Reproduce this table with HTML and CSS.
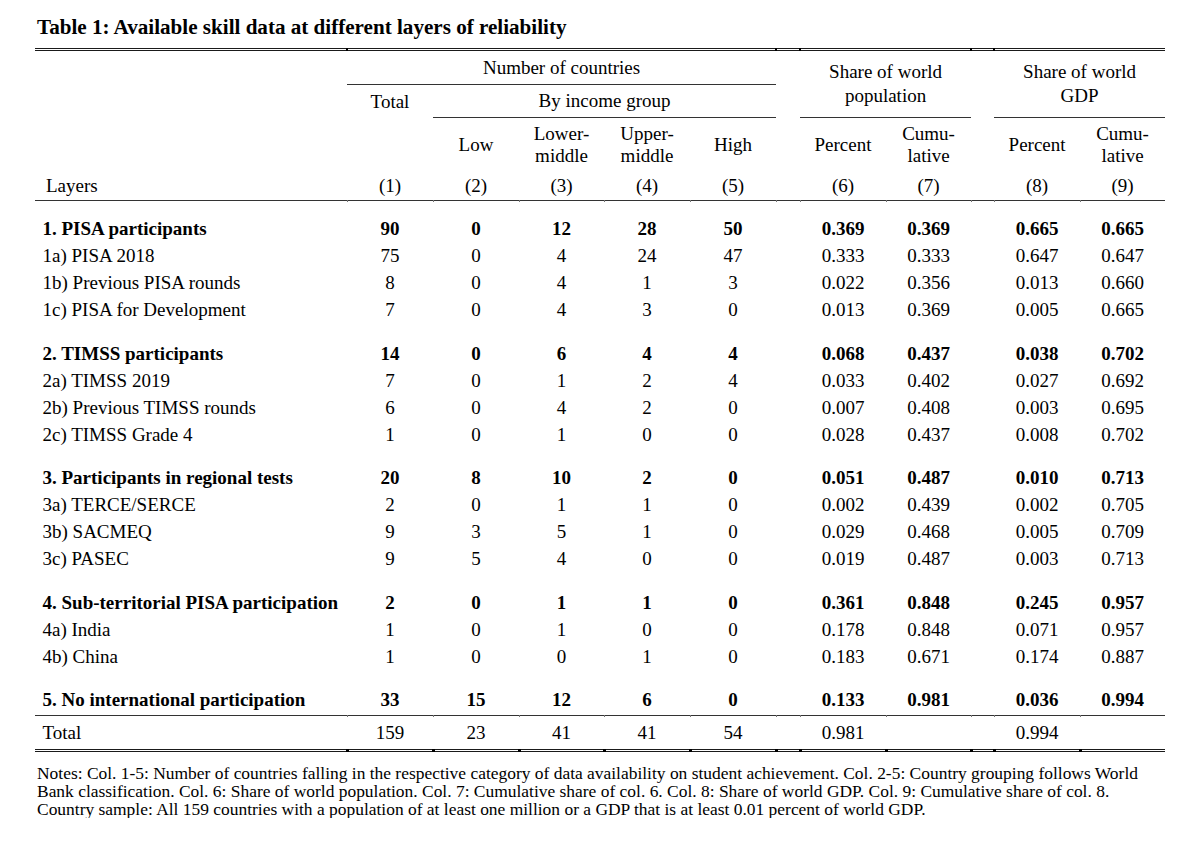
FILE: index.html
```html
<!DOCTYPE html>
<html>
<head>
<meta charset="utf-8">
<title>Table 1</title>
<link rel="stylesheet" href="styles.css">
</head>
<body>
<div class="page">
  <h1 class="title">Table 1: Available skill data at different layers of reliability</h1>
  <table class="tbl">
    <colgroup>
      <col class="w-lab">
      <col class="w-num"><col class="w-num"><col class="w-num85"><col class="w-num"><col class="w-num">
      <col class="w-gap1">
      <col class="w-num"><col class="w-num85">
      <col class="w-gap2">
      <col class="w-num"><col class="w-num85">
    </colgroup>
    <thead>
      <tr class="hA">
        <td rowspan="3"></td>
        <td colspan="5" class="rb dot-top">Number of countries</td>
        <td rowspan="3" class="dot-top"></td>
        <td colspan="2" rowspan="2" class="rb two dot-top">Share of world<br>population</td>
        <td rowspan="3" class="dot-top"></td>
        <td colspan="2" rowspan="2" class="rb two dot-top">Share of world<br>GDP</td>
      </tr>
      <tr class="hB">
        <td>Total</td>
        <td colspan="4" class="rb">By income group</td>
      </tr>
      <tr class="hC">
        <td></td>
        <td>Low</td>
        <td class="twoC">Lower-<br>middle</td>
        <td class="twoC">Upper-<br>middle</td>
        <td>High</td>
        <td>Percent</td>
        <td class="twoC">Cumu-<br>lative</td>
        <td>Percent</td>
        <td class="twoC">Cumu-<br>lative</td>
      </tr>
      <tr class="hD">
        <td class="lab-h">Layers</td>
        <td>(1)</td><td>(2)</td><td>(3)</td><td>(4)</td><td>(5)</td>
        <td></td>
        <td>(6)</td><td>(7)</td>
        <td></td>
        <td>(8)</td><td>(9)</td>
      </tr>
    </thead>
    <tbody>
      <tr class="grp first b">
        <td class="lab">1. PISA participants</td>
        <td>90</td><td>0</td><td>12</td><td>28</td><td>50</td><td></td>
        <td>0.369</td><td>0.369</td><td></td><td>0.665</td><td>0.665</td>
      </tr>
      <tr>
        <td class="lab">1a) PISA 2018</td>
        <td>75</td><td>0</td><td>4</td><td>24</td><td>47</td><td></td>
        <td>0.333</td><td>0.333</td><td></td><td>0.647</td><td>0.647</td>
      </tr>
      <tr>
        <td class="lab">1b) Previous PISA rounds</td>
        <td>8</td><td>0</td><td>4</td><td>1</td><td>3</td><td></td>
        <td>0.022</td><td>0.356</td><td></td><td>0.013</td><td>0.660</td>
      </tr>
      <tr>
        <td class="lab">1c) PISA for Development</td>
        <td>7</td><td>0</td><td>4</td><td>3</td><td>0</td><td></td>
        <td>0.013</td><td>0.369</td><td></td><td>0.005</td><td>0.665</td>
      </tr>

      <tr class="grp b">
        <td class="lab">2. TIMSS participants</td>
        <td>14</td><td>0</td><td>6</td><td>4</td><td>4</td><td></td>
        <td>0.068</td><td>0.437</td><td></td><td>0.038</td><td>0.702</td>
      </tr>
      <tr>
        <td class="lab">2a) TIMSS 2019</td>
        <td>7</td><td>0</td><td>1</td><td>2</td><td>4</td><td></td>
        <td>0.033</td><td>0.402</td><td></td><td>0.027</td><td>0.692</td>
      </tr>
      <tr>
        <td class="lab">2b) Previous TIMSS rounds</td>
        <td>6</td><td>0</td><td>4</td><td>2</td><td>0</td><td></td>
        <td>0.007</td><td>0.408</td><td></td><td>0.003</td><td>0.695</td>
      </tr>
      <tr>
        <td class="lab">2c) TIMSS Grade 4</td>
        <td>1</td><td>0</td><td>1</td><td>0</td><td>0</td><td></td>
        <td>0.028</td><td>0.437</td><td></td><td>0.008</td><td>0.702</td>
      </tr>

      <tr class="grp b">
        <td class="lab">3. Participants in regional tests</td>
        <td>20</td><td>8</td><td>10</td><td>2</td><td>0</td><td></td>
        <td>0.051</td><td>0.487</td><td></td><td>0.010</td><td>0.713</td>
      </tr>
      <tr>
        <td class="lab">3a) TERCE/SERCE</td>
        <td>2</td><td>0</td><td>1</td><td>1</td><td>0</td><td></td>
        <td>0.002</td><td>0.439</td><td></td><td>0.002</td><td>0.705</td>
      </tr>
      <tr>
        <td class="lab">3b) SACMEQ</td>
        <td>9</td><td>3</td><td>5</td><td>1</td><td>0</td><td></td>
        <td>0.029</td><td>0.468</td><td></td><td>0.005</td><td>0.709</td>
      </tr>
      <tr>
        <td class="lab">3c) PASEC</td>
        <td>9</td><td>5</td><td>4</td><td>0</td><td>0</td><td></td>
        <td>0.019</td><td>0.487</td><td></td><td>0.003</td><td>0.713</td>
      </tr>

      <tr class="grp b">
        <td class="lab">4. Sub-territorial PISA participation</td>
        <td>2</td><td>0</td><td>1</td><td>1</td><td>0</td><td></td>
        <td>0.361</td><td>0.848</td><td></td><td>0.245</td><td>0.957</td>
      </tr>
      <tr>
        <td class="lab">4a) India</td>
        <td>1</td><td>0</td><td>1</td><td>0</td><td>0</td><td></td>
        <td>0.178</td><td>0.848</td><td></td><td>0.071</td><td>0.957</td>
      </tr>
      <tr>
        <td class="lab">4b) China</td>
        <td>1</td><td>0</td><td>0</td><td>1</td><td>0</td><td></td>
        <td>0.183</td><td>0.671</td><td></td><td>0.174</td><td>0.887</td>
      </tr>

      <tr class="grp last b">
        <td class="lab">5. No international participation</td>
        <td>33</td><td>15</td><td>12</td><td>6</td><td>0</td><td></td>
        <td>0.133</td><td>0.981</td><td></td><td>0.036</td><td>0.994</td>
      </tr>
      <tr class="total">
        <td class="lab">Total</td>
        <td>159</td><td>23</td><td>41</td><td>41</td><td>54</td><td></td>
        <td>0.981</td><td></td><td></td><td>0.994</td><td></td>
      </tr>
    </tbody>
  </table>
  <p class="notes">Notes: Col. 1-5: Number of countries falling in the respective category of data availability on student achievement. Col. 2-5: Country grouping follows World<br>Bank classification. Col. 6: Share of world population. Col. 7: Cumulative share of col. 6. Col. 8: Share of world GDP. Col. 9: Cumulative share of col. 8.<br>Country sample: All 159 countries with a population of at least one million or a GDP that is at least 0.01 percent of world GDP.</p>
</div>
</body>
</html>
```

FILE: styles.css
```css
html, body {
  margin: 0;
  padding: 0;
  background: #ffffff;
}

body {
  font-family: "Liberation Serif", "Times New Roman", serif;
  color: #000000;
}

.page {
  padding: 15px 0 0 35px;
  width: 1130px;
}

.title {
  margin: 0 0 9px 2px;
  font-size: 21.1px;
  line-height: 24px;
  font-weight: bold;
  white-space: nowrap;
}

.tbl {
  width: 1130px;
  table-layout: fixed;
  border-collapse: separate;
  border-spacing: 0;
  border-top: 3px double #1a1a1a;
  border-bottom: 3px double #1a1a1a;
  font-size: 19px;
}

.w-lab { width: 312px; }
.w-num { width: 86px; }
.w-num85 { width: 85px; }
.w-gap1 { width: 24px; }
.w-gap2 { width: 23px; }

.tbl td {
  position: relative;
  padding: 0;
  text-align: center;
  vertical-align: middle;
  white-space: nowrap;
}

/* header rows */
.hA { height: 34px; }
.hB { height: 33px; }
.hC { height: 54px; }
.hD { height: 29px; }

.tbl thead td { line-height: 22px; }
.tbl thead td.two { line-height: 24px; }

.tbl td.rb { border-bottom: 1px solid #333333; }

.hD td { border-bottom: 1px solid #333333; }

.tbl td.lab-h {
  text-align: left;
  padding-left: 11px;
}

/* small junction marks on the rules */
.tbl td.dot-top::before {
  content: "";
  position: absolute;
  top: -3px;
  left: -1px;
  width: 2px;
  height: 3px;
  background: #000000;
}

.hD td + td::after,
.last td + td::after {
  content: "";
  position: absolute;
  bottom: -2px;
  left: 0;
  width: 1px;
  height: 2px;
  background: #777777;
}

.total td + td::after {
  content: "";
  position: absolute;
  bottom: -3px;
  left: -1px;
  width: 3px;
  height: 3px;
  background: #000000;
}

/* body rows */
.tbl tbody td { line-height: 27px; }

.tbl td.lab {
  text-align: left;
  padding-left: 7.5px;
}

.grp td { padding-top: 16.4px; }
.grp.first td { padding-top: 14.4px; }

.b td { font-weight: bold; }

.last td {
  padding-bottom: 2px;
  border-bottom: 1px solid #333333;
}

.tbl tbody .total td { line-height: 33px; }

.notes {
  margin: 12px 0 0 2px;
  font-size: 17.45px;
  line-height: 18px;
  white-space: nowrap;
}
```
